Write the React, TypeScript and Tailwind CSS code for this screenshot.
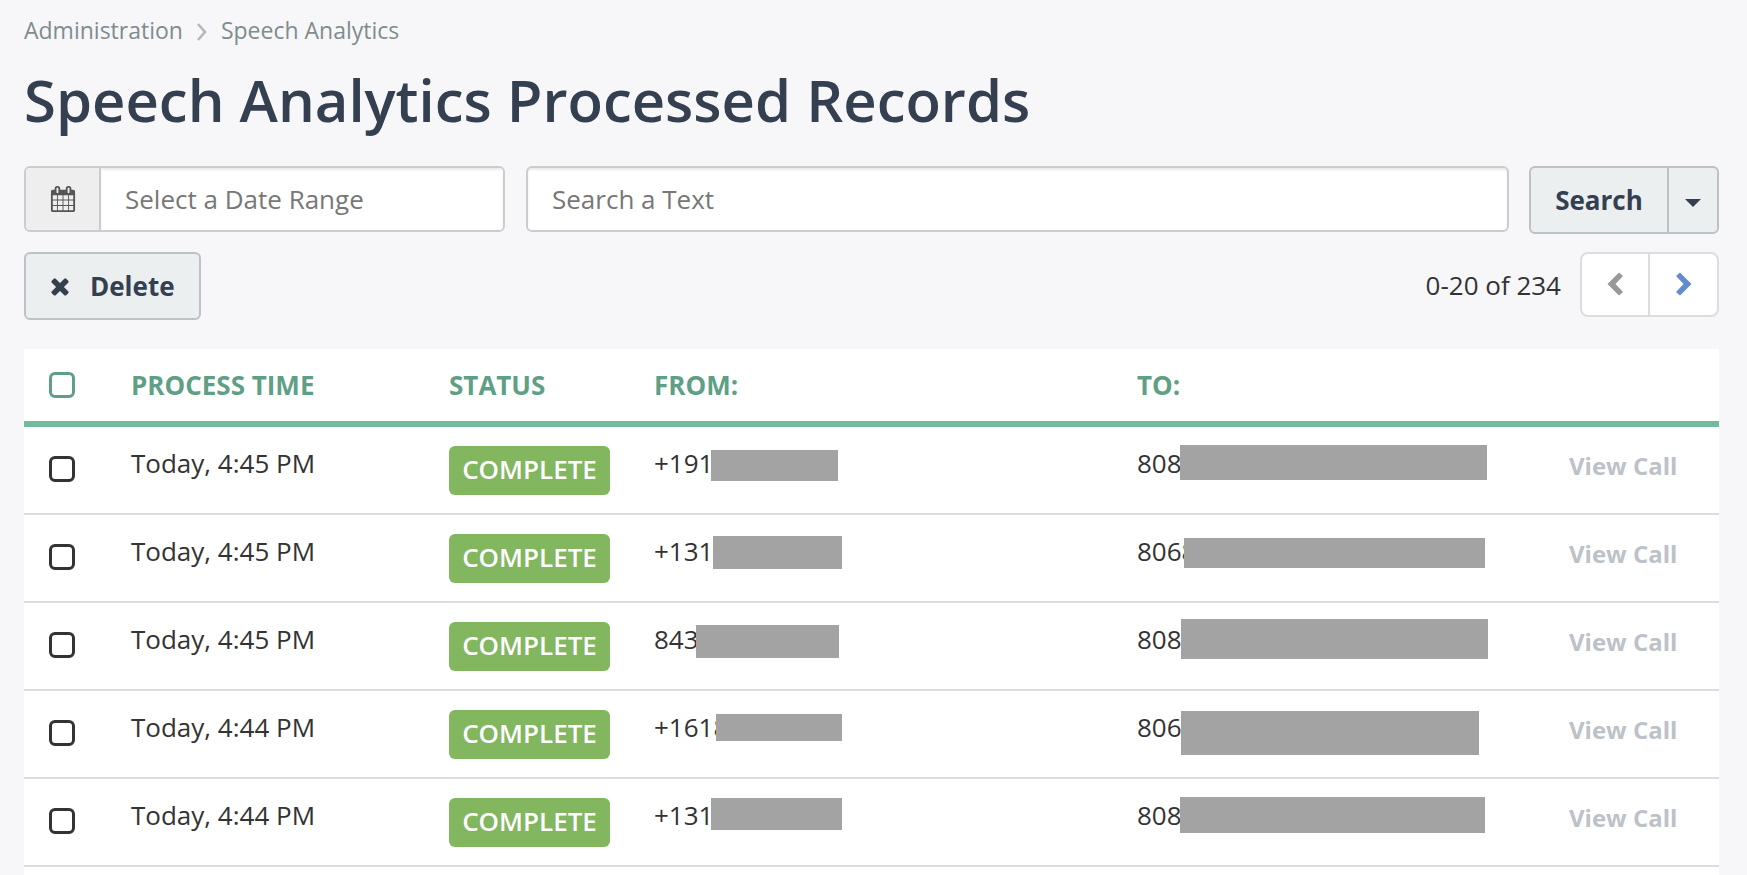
import { useId } from 'react';

type RecordRow = {
  time: string;
  from: string;
  fromMask: string;
  to: string;
  toMask: string;
};

const rows: RecordRow[] = [
  {
    time: 'Today, 4:45 PM',
    from: '+191',
    fromMask: 'left-[81px] top-[23px] w-[127px] h-[31px]',
    to: '808',
    toMask: 'left-[67px] top-[18px] w-[307px] h-[35px]',
  },
  {
    time: 'Today, 4:45 PM',
    from: '+131',
    fromMask: 'left-[83px] top-[21px] w-[129px] h-[33px]',
    to: '8068',
    toMask: 'left-[71px] top-[23px] w-[301px] h-[30px]',
  },
  {
    time: 'Today, 4:45 PM',
    from: '843',
    fromMask: 'left-[66px] top-[22px] w-[143px] h-[33px]',
    to: '808',
    toMask: 'left-[68px] top-[16px] w-[307px] h-[40px]',
  },
  {
    time: 'Today, 4:44 PM',
    from: '+1618',
    fromMask: 'left-[86px] top-[23px] w-[126px] h-[27px]',
    to: '806',
    toMask: 'left-[68px] top-[20px] w-[298px] h-[44px]',
  },
  {
    time: 'Today, 4:44 PM',
    from: '+131',
    fromMask: 'left-[81px] top-[19px] w-[131px] h-[32px]',
    to: '808',
    toMask: 'left-[67px] top-[18px] w-[305px] h-[36px]',
  },
];

function CalendarIcon() {
  return (
    <svg viewBox="0 0 1792 1792" className="size-[26px]" fill="currentColor" aria-hidden="true">
      <path d="M192 1664h288v-288h-288v288zm352 0h320v-288h-320v288zm-352-352h288v-320h-288v320zm352 0h320v-320h-320v320zm-352-384h288v-288h-288v288zm736 736h320v-288h-320v288zm-384-736h320v-288h-320v288zm768 736h288v-288h-288v288zm-384-352h320v-320h-320v320zm-352-864v-288q0-13-9.5-22.5t-22.5-9.5h-64q-13 0-22.5 9.5t-9.5 22.5v288q0 13 9.5 22.5t22.5 9.5h64q13 0 22.5-9.5t9.5-22.5zm736 864h288v-320h-288v320zm-384-384h320v-288h-320v288zm384 0h288v-288h-288v288zm32-480v-288q0-13-9.5-22.5t-22.5-9.5h-64q-13 0-22.5 9.5t-9.5 22.5v288q0 13 9.5 22.5t22.5 9.5h64q13 0 22.5-9.5t9.5-22.5zm384-64v1280q0 52-38 90t-90 38h-1408q-52 0-90-38t-38-90v-1280q0-52 38-90t90-38h128v-96q0-66 47-113t113-47h64q66 0 113 47t47 113v96h384v-96q0-66 47-113t113-47h64q66 0 113 47t47 113v96h128q52 0 90 38t38 90z" />
    </svg>
  );
}

function TimesIcon() {
  return (
    <svg viewBox="0 0 1792 1792" className="size-[26px]" fill="currentColor" aria-hidden="true">
      <path d="M1490 1322q0 40-28 68l-136 136q-28 28-68 28t-68-28l-294-294-294 294q-28 28-68 28t-68-28l-136-136q-28-28-28-68t28-68l294-294-294-294q-28-28-28-68t28-68l136-136q28-28 68-28t68 28l294 294 294-294q28-28 68-28t68 28l136 136q28 28 28 68t-28 68l-294 294 294 294q28 28 28 68z" />
    </svg>
  );
}

function PagerChevron({ points }: { points: string }) {
  return (
    <svg viewBox="0 0 16 24" className="mb-[2px] h-6 w-4" fill="currentColor" aria-hidden="true">
      <polygon points={points} />
    </svg>
  );
}

function Tick({ label, className }: { label: string; className: string }) {
  return (
    <input
      type="checkbox"
      aria-label={label}
      className={`block appearance-none size-[26px] rounded-[6px] border-[3px] bg-white checked:bg-current ${className}`}
    />
  );
}

export default function App() {
  const dateId = useId();
  return (
    <main className="flex min-h-screen flex-col bg-[#f7f7f9] pl-6 pr-7 pt-3 font-['Open_Sans','Noto_Sans',sans-serif] text-[26px] leading-9 text-[#333333]">
      <nav aria-label="Breadcrumb" className="flex h-9 items-center text-[23px] text-[#7f8c8d]">
        <a href="#administration">Administration</a>
        <svg viewBox="0 0 10 18" className="mx-[14px] mt-1 h-[18px] w-[10px]" fill="none" stroke="#b4b7bd" strokeWidth="2.6" aria-hidden="true">
          <polyline points="1,1 8,9 1,17" />
        </svg>
        <a href="#speech-analytics">Speech Analytics</a>
      </nav>

      <h1 className="pt-4 text-[58px] font-semibold leading-[72px] text-[#34404f]">
        Speech Analytics Processed Records
      </h1>

      <form className="mt-[30px] flex items-start" onSubmit={(e) => e.preventDefault()}>
        <div className="flex h-[66px] w-[481px] overflow-hidden rounded-[6px] border-2 border-[#cccccc]">
          <label htmlFor={dateId} aria-label="Date range" className="flex w-[75px] items-center justify-center border-r-2 border-[#cccccc] bg-[#eeeeee] text-[#555555]">
            <CalendarIcon />
          </label>
          <input
            id={dateId}
            type="text"
            placeholder="Select a Date Range"
            className="min-w-0 flex-1 bg-white px-6 shadow-[inset_0_2px_2px_rgba(0,0,0,0.075)] placeholder:text-[#777777] outline-none"
          />
        </div>
        <input
          type="text"
          aria-label="Search a Text"
          placeholder="Search a Text"
          className="ml-[21px] mr-5 h-[66px] min-w-0 flex-1 rounded-[6px] border-2 border-[#cccccc] bg-white px-6 shadow-[inset_0_2px_2px_rgba(0,0,0,0.075)] placeholder:text-[#777777] outline-none"
        />
        <div className="flex h-[68px] rounded-[6px] border-2 border-[#bdc1c8] bg-[#ebeff0] text-[#34404f]">
          <button type="submit" className="w-[138px] border-r-2 border-[#bdc1c8] font-bold">Search</button>
          <button type="button" aria-label="More search options" className="flex w-12 items-center justify-center">
            <svg viewBox="0 0 16 8" className="mt-[6px] h-2 w-4" fill="currentColor" aria-hidden="true">
              <path d="M0 0h16L8 8z" />
            </svg>
          </button>
        </div>
      </form>

      <div className="mt-[18px] flex items-start justify-between">
        <button type="button" className="flex h-[68px] items-center rounded-[6px] border-2 border-[#bdc1c8] bg-[#ebeff0] pl-[21px] pr-6 font-bold text-[#34404f]">
          <TimesIcon />
          <span className="ml-[17px]">Delete</span>
        </button>
        <div className="flex items-center">
          <span className="mr-[19px]">0-20 of 234</span>
          <div className="flex h-[65px] rounded-lg border-2 border-[#dddddd] bg-white">
            <button type="button" aria-label="Previous page" className="flex w-[68px] items-center justify-center border-r-2 border-[#dddddd] text-[#999999]">
              <PagerChevron points="12,0.5 16,4 8.5,12 16,20 12,23.5 0.5,12" />
            </button>
            <button type="button" aria-label="Next page" className="flex w-[67px] items-center justify-center text-[#628dcb]">
              <PagerChevron points="4,0.5 0,4 7.5,12 0,20 4,23.5 15.5,12" />
            </button>
          </div>
        </div>
      </div>

      <section aria-label="Processed records" className="mt-[29px] flex-1 bg-white">
        <table className="w-full table-fixed border-separate border-spacing-0 text-left">
          <colgroup>
            <col className="w-[83px]" />
            <col className="w-[318px]" />
            <col className="w-[205px]" />
            <col className="w-[483px]" />
            <col />
            <col className="w-[174px]" />
          </colgroup>
          <thead>
            <tr className="h-[78px] text-[#5f9f86] *:border-b-[6px] *:border-[#73b99c]">
              <th className="pl-[25px]"><Tick label="Select all records" className="border-[#5f9f86] text-[#5f9f86]" /></th>
              <th className="px-6 font-bold">PROCESS TIME</th>
              <th className="px-6 font-bold">STATUS</th>
              <th className="px-6 font-bold">FROM:</th>
              <th className="px-6 font-bold">TO:</th>
              <td />
            </tr>
          </thead>
          <tbody>
            {rows.map((row, i) => (
              <tr key={i} className="h-[88px] align-top *:border-b-2 *:border-[#dddddd]">
                <td className="pl-[25px] pt-[29px]"><Tick label={`Select record ${i + 1}`} className="border-[#333333] text-[#333333]" /></td>
                <td className="px-6 pt-[18px]">{row.time}</td>
                <td className="px-6 pt-[19px]">
                  <span className="flex h-[49px] w-[161px] items-start justify-center rounded-[6px] bg-[#82b65f] pt-[5px] font-semibold text-white">COMPLETE</span>
                </td>
                <td className="relative px-6 pt-[18px]">
                  {row.from}
                  <span className={`absolute bg-[#a3a3a3] ${row.fromMask}`} />
                </td>
                <td className="relative px-6 pt-[18px]">
                  {row.to}
                  <span className={`absolute bg-[#a3a3a3] ${row.toMask}`} />
                </td>
                <td className="px-6 pt-[21px] text-[24px] font-bold text-[#bdc1c8]">
                  <a href={`#call-${i + 1}`}>View Call</a>
                </td>
              </tr>
            ))}
          </tbody>
        </table>
      </section>
    </main>
  );
}
